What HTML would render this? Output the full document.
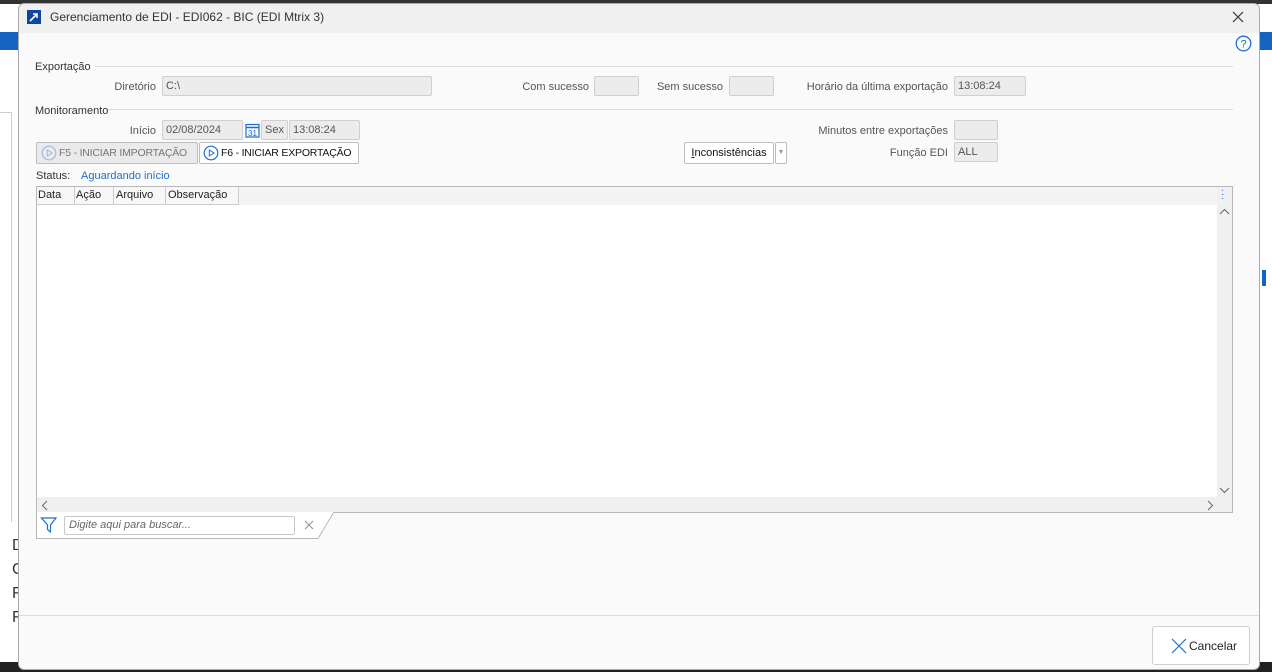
<!DOCTYPE html>
<html><head><meta charset="utf-8"><style>
*{box-sizing:border-box;margin:0;padding:0}
body{width:1272px;height:672px;overflow:hidden;background:#f3f3f3;font-family:"Liberation Sans",Tahoma,sans-serif;font-size:11px;color:#222;position:relative}
.a{position:absolute;white-space:nowrap}
.lbl{position:absolute;color:#555;text-align:right;font-size:11px;line-height:20px;white-space:nowrap}
.inp{position:absolute;background:#ececec;border:1px solid #cfcfcf;border-radius:2px;color:#555;padding-left:3px;line-height:18px;font-size:11px;white-space:nowrap}
.line{position:absolute;height:1px;background:#dcdcdc}
.btn{position:absolute;background:#fff;border:1px solid #bdbdbd;border-radius:2px;font-size:11px;line-height:20px;white-space:nowrap;overflow:hidden}
</style></head><body>
<div class="a" style="left:0;top:0;width:1272px;height:672px;background:#fff"></div>
<div class="a" style="left:0;top:0;width:1272px;height:4px;background:#333"></div>
<div class="a" style="left:0;top:32px;width:18px;height:18px;background:#1565c0"></div>
<div class="a" style="left:1258px;top:32px;width:14px;height:18px;background:#1565c0"></div>
<div class="a" style="left:0;top:112px;width:12px;height:410px;border-top:1px solid #ccc;border-right:1px solid #ccc;background:#fff"></div>
<div class="a" style="left:12px;top:534px;font-size:16px;color:#333;line-height:24px">D<br>C<br>F<br>F</div>
<div class="a" style="left:0;top:662px;width:1272px;height:10px;background:#222"></div>
<div class="a" style="left:1262px;top:270px;width:4px;height:16px;background:#1565c0"></div>
<div class="a" style="left:18px;top:3px;width:1242px;height:667px;background:#fafafa;border:1px solid #aaa;border-radius:6px;overflow:hidden">
 <div class="a" style="left:0;top:0;width:1242px;height:29px;background:#f0f0f0"></div>
</div>
<div class="a" style="left:27px;top:10px;width:14px;height:14px;background:#0d47a1"></div>
<svg class="a" style="left:27px;top:10px" width="14" height="14"><path d="M3 11 L10 4 M6 4 H10 V8" stroke="#fff" stroke-width="1.6" fill="none"/></svg>
<div class="a" style="left:50px;top:9px;font-size:12px;color:#333;line-height:16px">Gerenciamento de EDI - EDI062 - BIC (EDI Mtrix 3)</div>
<svg class="a" style="left:1232px;top:11px" width="12" height="12"><path d="M1 1 L11 11 M11 1 L1 11" stroke="#333" stroke-width="1.2"/></svg>
<svg class="a" style="left:1235px;top:35px" width="17" height="17"><circle cx="8.5" cy="8.5" r="7.3" fill="none" stroke="#1e6fd0" stroke-width="1.3"/><text x="8.5" y="12.5" font-size="11" text-anchor="middle" fill="#1e6fd0" font-family="Liberation Sans">?</text></svg>

<div class="a" style="left:35px;top:60px;line-height:14px;color:#333">Exportação</div>
<div class="line" style="left:95px;top:66px;width:1138px"></div>
<div class="lbl" style="left:60px;top:77px;width:96px">Diretório</div>
<div class="inp" style="left:162px;top:76px;width:270px;height:20px">C:\</div>
<div class="lbl" style="left:480px;top:77px;width:109px">Com sucesso</div>
<div class="inp" style="left:594px;top:76px;width:45px;height:20px"></div>
<div class="lbl" style="left:640px;top:77px;width:83px">Sem sucesso</div>
<div class="inp" style="left:729px;top:76px;width:45px;height:20px"></div>
<div class="lbl" style="left:780px;top:77px;width:168px">Horário da última exportação</div>
<div class="inp" style="left:954px;top:76px;width:72px;height:20px">13:08:24</div>

<div class="a" style="left:35px;top:104px;line-height:14px;color:#333">Monitoramento</div>
<div class="line" style="left:108px;top:109px;width:1125px"></div>
<div class="lbl" style="left:60px;top:121px;width:96px">Início</div>
<div class="inp" style="left:162px;top:120px;width:81px;height:20px">02/08/2024</div>
<svg class="a" style="left:245px;top:122px" width="15" height="16"><rect x="1" y="2.5" width="13" height="12.5" fill="none" stroke="#1e6fd0" stroke-width="1.2"/><line x1="1" y1="5.5" x2="14" y2="5.5" stroke="#1e6fd0" stroke-width="1.5"/><text x="7.5" y="14" font-size="8" text-anchor="middle" fill="#1e6fd0" font-family="Liberation Sans">31</text></svg>
<div class="inp" style="left:261px;top:120px;width:27px;height:20px">Sex</div>
<div class="inp" style="left:289px;top:120px;width:71px;height:20px">13:08:24</div>
<div class="btn" style="left:36px;top:142px;width:162px;height:22px;background:#eaeaea;color:#777;padding-left:22px;font-size:10.5px;letter-spacing:-0.2px">F5 - INICIAR IMPORTAÇÃO</div>
<svg class="a" style="left:41px;top:145px" width="16" height="16"><circle cx="8" cy="8" r="6.8" fill="none" stroke="#9dbbe4" stroke-width="1.2"/><path d="M6.3 5 L11 8 L6.3 11 Z" fill="none" stroke="#9dbbe4"/></svg>
<div class="btn" style="left:199px;top:142px;width:160px;height:22px;color:#111;padding-left:21px;font-size:10.5px;letter-spacing:-0.2px">F6 - INICIAR EXPORTAÇÃO</div>
<svg class="a" style="left:203px;top:145px" width="16" height="16"><circle cx="8" cy="8" r="6.8" fill="none" stroke="#1e6fd0" stroke-width="1.2"/><path d="M6.3 5 L11 8 L6.3 11 Z" fill="none" stroke="#1e6fd0"/></svg>
<div class="btn" style="left:684px;top:142px;width:90px;height:22px;text-align:center;color:#111"><u>I</u>nconsistências</div>
<div class="btn" style="left:775px;top:142px;width:12px;height:22px;text-align:center;color:#999;font-size:7px">▼</div>
<div class="lbl" style="left:780px;top:121px;width:168px">Minutos entre exportações</div>
<div class="inp" style="left:954px;top:120px;width:44px;height:20px"></div>
<div class="lbl" style="left:780px;top:143px;width:168px">Função EDI</div>
<div class="inp" style="left:954px;top:142px;width:44px;height:20px">ALL</div>

<div class="a" style="left:36px;top:169px;line-height:14px;color:#333">Status:</div>
<div class="a" style="left:81px;top:169px;line-height:14px;color:#1e6fd0">Aguardando início</div>

<div class="a" style="left:36px;top:186px;width:1197px;height:327px;border:1px solid #b8b8b8;background:#fff"></div>
<div class="a" style="left:37px;top:187px;width:1180px;height:18px;background:#f4f4f4"></div>
<div class="a" style="left:37px;top:187px;width:202px;height:18px;border-right:1px solid #ccc;border-bottom:1px solid #ccc;background:#f7f7f7;line-height:17px;color:#222">
 <span class="a" style="left:1px;width:37px;height:17px;border-right:1px solid #ccc">Data</span>
 <span class="a" style="left:38px;width:39px;height:17px;border-right:1px solid #ccc;padding-left:1px">Ação</span>
 <span class="a" style="left:77px;width:52px;height:17px;border-right:1px solid #ccc;padding-left:2px">Arquivo</span>
 <span class="a" style="left:130px;padding-left:1px">Observação</span>
</div>
<div class="a" style="left:1217px;top:187px;width:15px;height:310px;background:#f0f0f0"></div>
<div class="a" style="left:1221px;top:189px;color:#1e6fd0;font-size:10px;line-height:4px">·<br>·<br>·</div>
<svg class="a" style="left:1219px;top:208px" width="11" height="8"><path d="M1 6 L5.5 1.5 L10 6" fill="none" stroke="#666"/></svg>
<svg class="a" style="left:1219px;top:486px" width="11" height="8"><path d="M1 2 L5.5 6.5 L10 2" fill="none" stroke="#666"/></svg>
<div class="a" style="left:37px;top:497px;width:1195px;height:15px;background:#f0f0f0"></div>
<svg class="a" style="left:41px;top:500px" width="8" height="11"><path d="M6 1 L1.5 5.5 L6 10" fill="none" stroke="#666"/></svg>
<svg class="a" style="left:1206px;top:500px" width="8" height="11"><path d="M2 1 L6.5 5.5 L2 10" fill="none" stroke="#666"/></svg>
<svg class="a" style="left:36px;top:512px" width="300" height="27"><path d="M0.5 0 V26.5 H282 L298 0" fill="#fff" stroke="#b8b8b8"/></svg>
<svg class="a" style="left:40px;top:516px" width="18" height="18"><path d="M1.5 2 H16 L10.5 9 V16 L7.5 13.5 V9 Z" fill="none" stroke="#1e6fd0" stroke-width="1.2"/></svg>
<div class="a" style="left:64px;top:516px;width:231px;height:19px;border:1px solid #c8c8c8;border-radius:2px;background:#fff;font-style:italic;color:#666;padding-left:4px;line-height:17px">Digite aqui para buscar...</div>
<svg class="a" style="left:304px;top:520px" width="10" height="10"><path d="M1 1 L9 9 M9 1 L1 9" stroke="#999" stroke-width="1.2"/></svg>

<div class="line" style="left:19px;top:615px;width:1240px"></div>
<div class="btn" style="left:1152px;top:626px;width:98px;height:39px;border-color:#cfcfcf;border-radius:3px"></div>
<svg class="a" style="left:1171px;top:638px" width="16" height="16"><path d="M1 1 L15 15 M15 1 L1 15" stroke="#1e6fd0" stroke-width="1.2"/></svg>
<div class="a" style="left:1189px;top:639px;font-size:12px;color:#222;line-height:14px">Cancelar</div>
</body></html>
